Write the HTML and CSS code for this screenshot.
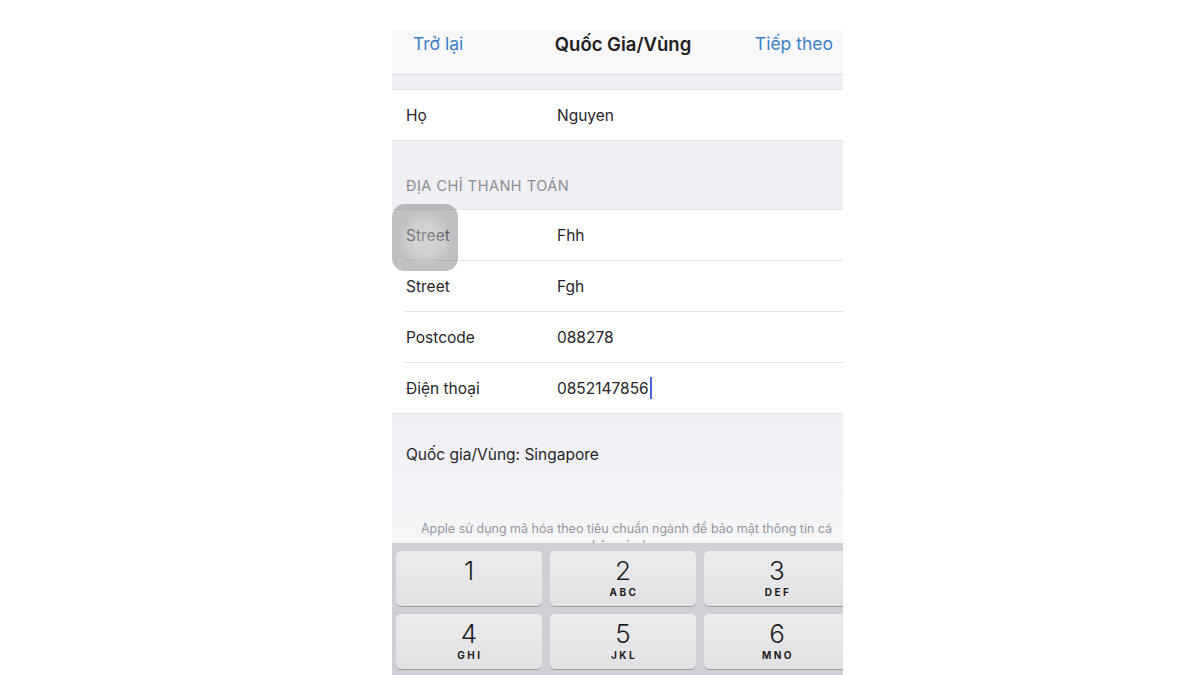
FILE: index.html
```html
<!DOCTYPE html>
<html lang="vi">
<head>
    <meta charset="UTF-8">
    <meta name="viewport" content="width=device-width, initial-scale=1.0">
    <title>Quốc Gia/Vùng</title>
    <link rel="stylesheet" href="styles.css">
</head>
<body>

    <div class="phone">
        <div class="status"></div>

        <div class="navbar">
            <span class="nav-link">Trở lại</span>
            <span class="nav-title">Quốc Gia/Vùng</span>
            <span class="nav-link nav-next">Tiếp theo</span>
        </div>

        <div class="gap"></div>

        <div class="group">
            <div class="row"><span class="label">Họ</span><span class="value">Nguyen</span></div>
        </div>

        <div class="section-header">ĐỊA CHỈ THANH TOÁN</div>

        <div class="group">
            <div class="row"><span class="label">Street</span><span class="value">Fhh</span></div>
            <div class="row"><span class="label">Street</span><span class="value">Fgh</span></div>
            <div class="row"><span class="label">Postcode</span><span class="value">088278</span></div>
            <div class="row"><span class="label">Điện thoại</span><span class="value">0852147856<span class="cursor"></span></span></div>
        </div>

        <div class="footer">
            <p class="country">Quốc gia/Vùng: Singapore</p>
            <p class="note">Apple sử dụng mã hóa theo tiêu chuẩn ngành để bảo mật thông tin cá nhân của bạn.</p>
        </div>

        <div class="keyboard">
            <div class="key"><span class="digit">1</span></div>
            <div class="key"><span class="digit">2</span><span class="letters">ABC</span></div>
            <div class="key"><span class="digit">3</span><span class="letters">DEF</span></div>
            <div class="key"><span class="digit">4</span><span class="letters">GHI</span></div>
            <div class="key"><span class="digit">5</span><span class="letters">JKL</span></div>
            <div class="key"><span class="digit">6</span><span class="letters">MNO</span></div>
        </div>

        <!-- touch indicator over the first Street label -->
        <div class="touch"></div>
    </div>

</body>
</html>
```

FILE: styles.css
```css
body {
    margin: 0;
    background-color: #ffffff;
    font-family: "Inter", "Noto Sans", sans-serif;
    overflow: hidden;
}
.phone {
    position: relative;
    width: 451px;
    height: 675px;
    margin-left: 392px;
    background-color: #efeff4;
    overflow: hidden;
    display: flex;
    flex-direction: column;
}
.status {
    height: 30px;
    flex-shrink: 0;
    background-color: #ffffff;
}
.navbar {
    height: 45px;
    flex-shrink: 0;
    box-sizing: border-box;
    padding: 4px 10px 0 21px;
    display: grid;
    grid-template-columns: 1fr auto 1fr;
    align-items: start;
    background-color: #f8f8fa;
    border-bottom: 1px solid #e0e0e4;
    line-height: 20px;
}
.nav-link {
    color: #3c7fc6;
    font-size: 17.5px;
}
.nav-next { text-align: right; }
.nav-title {
    font-size: 18.5px;
    font-weight: 600;
    color: #1e1e20;
}
.gap {
    height: 14px;
    flex-shrink: 0;
}
.group {
    flex-shrink: 0;
    background-color: #ffffff;
    border-top: 1px solid #e2e2e6;
    border-bottom: 1px solid #e2e2e6;
}
.row {
    height: 50px;
    display: flex;
    align-items: center;
    padding-left: 14px;
    font-size: 15.5px;
    color: #262628;
}
.row + .row {
    height: 51px;
    box-sizing: border-box;
    border-top: 1px solid #e4e4e8;
    margin-left: 13px;
    padding-left: 1px;
}
.label { width: 151px; flex-shrink: 0; }
.value {
    display: flex;
    align-items: center;
}
.cursor {
    display: inline-block;
    width: 2px;
    height: 22px;
    margin-left: 1px;
    background-color: #4a62d4;
}
.section-header {
    height: 68px;
    flex-shrink: 0;
    box-sizing: border-box;
    display: flex;
    align-items: flex-end;
    padding: 0 0 14px 14px;
    font-size: 14.5px;
    line-height: 18px;
    color: #8d8d92;
    letter-spacing: 0.5px;
}
.footer {
    height: 129px;
    flex-shrink: 0;
    box-sizing: border-box;
    padding-top: 31px;
    background: linear-gradient(#efeff4, #f6f6f9);
}
.country {
    margin: 0;
    padding-left: 14px;
    font-size: 15.5px;
    line-height: 20px;
    color: #262628;
}
.note {
    margin: 55px 0 0;
    padding: 0 4px 0 22px;
    text-align: center;
    font-size: 12.5px;
    line-height: 17px;
    color: #96969b;
}
.keyboard {
    flex: 1;
    display: grid;
    grid-template-columns: repeat(3, 146px);
    grid-auto-rows: 55px;
    gap: 8px;
    padding: 8px 0 0 4px;
    background-color: #cfd0d5;
}
.key {
    display: flex;
    flex-direction: column;
    align-items: center;
    padding-top: 5px;
    box-sizing: border-box;
    border-radius: 5px;
    background: linear-gradient(#ececee, #e1e1e4);
    box-shadow: 0 1px 0 #9b9ca1;
    color: #1d1d1f;
}
.digit {
    font-size: 26px;
    font-weight: 300;
    line-height: 30px;
}
.letters {
    font-size: 10px;
    font-weight: 700;
    letter-spacing: 2.5px;
    line-height: 12px;
    margin-left: 2px;
}
.touch {
    position: absolute;
    left: 0;
    top: 204px;
    width: 66px;
    height: 67px;
    border-radius: 13px;
    background:
        radial-gradient(circle at 50% 52%, rgba(255, 255, 255, 0.35) 0, rgba(255, 255, 255, 0.25) 16px, rgba(255, 255, 255, 0) 28px),
        rgba(115, 115, 120, 0.45);
}
```
